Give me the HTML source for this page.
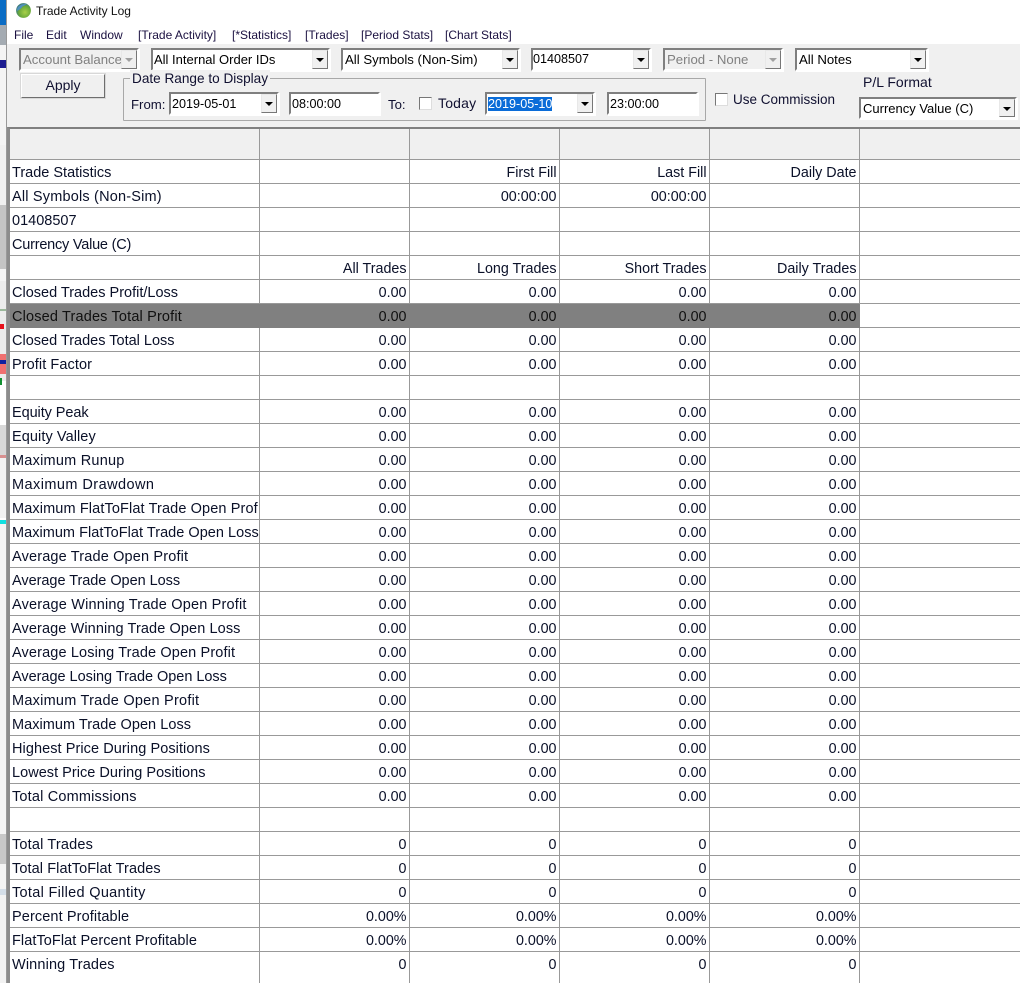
<!DOCTYPE html>
<html><head><meta charset="utf-8"><style>
html,body{margin:0;padding:0;background:#fff}
#p{position:relative;width:1020px;height:983px;overflow:hidden;background:#fff;font-family:"Liberation Sans",sans-serif;color:#101030}
.a{position:absolute;white-space:nowrap}
.s{position:absolute;left:0;width:6px}
.m{position:absolute;top:28px;font-size:12px;line-height:15px;white-space:nowrap;color:#1a1040}
.c{position:absolute;box-sizing:border-box;background:#fff;border:2px solid;border-color:#7f7f7f #fff #fff #7f7f7f;outline:0;font-size:13.2px;line-height:19px;padding-left:2px;white-space:nowrap;overflow:hidden;color:#000;box-shadow:1px 1px 0 #fff}
.c.d{background:#f0f0f0;color:#808080}
.c.n{font-size:12.6px}
.c.b{line-height:20px}
.c i{position:absolute;right:0;top:0;bottom:0;width:16px;background:#f0f0f0;border:1px solid;border-color:#e8e8e8 #777 #777 #e8e8e8;box-sizing:border-box}
.c i:after{content:"";position:absolute;left:3px;top:7px;border:4px solid transparent;border-top:4px solid #000;border-bottom:0}
.c.d i:after{border-top-color:#a0a0a0}
.k{position:absolute;box-sizing:border-box;width:13px;height:13px;background:#fff;border:1px solid #777;border-right-color:#ddd;border-bottom-color:#ddd}
.l{position:absolute;font-size:13.2px;line-height:17px;white-space:nowrap;color:#101030}
#t{position:absolute;left:7px;top:127px;width:1013px;height:856px;border-top:2px solid #808080;border-left:3px solid #8c8c8c;box-sizing:border-box}
.r{display:grid;grid-template-columns:250px 150px 150px 150px 150px 160px;height:24px;box-sizing:border-box;border-bottom:1px solid #999;font-size:14.3px;line-height:27px;color:#0a1028}
.r div{box-sizing:border-box;border-right:1px solid #999;text-align:right;padding-right:2.500px;white-space:nowrap;overflow:hidden;height:24px;margin-bottom:-1px}
.r div:first-child{text-align:left;padding:0 0 0 2px;font-size:14.5px}
.r div:last-child{border-right:0}
.h{background:#f0f0f0;height:31px}
.h div{height:31px}
.g{background:#808080;border-bottom-color:#808080}
.g div{border-right-color:#808080;color:#101010}
.g div:last-child{background:#fff;border-bottom:1px solid #999}
</style></head><body><div id="p">
<div class="s" style="top:0;height:25px;background:#0a6cc4"></div>
<div class="s" style="top:25px;height:20px;background:#a4abb2"></div>
<div class="s" style="top:45px;height:100px;background:#f4f4f4"></div>
<div class="s" style="top:60px;height:8px;background:#1c1c90"></div>
<div class="s" style="top:145px;height:60px;background:#f0f0f0"></div>
<div class="s" style="top:205px;height:64px;background:#c4c4c4"></div>
<div class="s" style="top:269px;height:12px;background:#f4f4f4"></div>
<div class="s" style="top:281px;height:100px;background:#ececec"></div>
<div class="s" style="top:309px;height:2px;background:#9bb89b"></div>
<div class="s" style="top:324px;height:5px;background:#e8121c;width:4px"></div>
<div class="s" style="top:354px;height:20px;background:#f07070"></div>
<div class="s" style="top:360px;height:4px;background:#1020a0"></div>
<div class="s" style="top:378px;height:7px;background:#109030;width:2px"></div>
<div class="s" style="top:425px;height:30px;background:#d8d8d8"></div>
<div class="s" style="top:455px;height:3px;background:#d89090"></div>
<div class="s" style="top:458px;height:60px;background:#f2f2f2"></div>
<div class="s" style="top:520px;height:4px;background:#10e0e0"></div>
<div class="s" style="top:524px;height:310px;background:#f4f4f4"></div>
<div class="s" style="top:834px;height:30px;background:#c8c8c8"></div>
<div class="s" style="top:864px;height:25px;background:#f4f4f4"></div>
<div class="s" style="top:889px;height:6px;background:#d4dee8"></div>
<div class="s" style="top:895px;height:88px;background:#f2f2f2"></div>
<div class="a" style="left:6px;top:0;width:1px;height:983px;background:#999"></div>

<div class="a" style="left:7px;top:44px;width:1013px;height:83px;background:#f0f0f0"></div>
<svg class="a" style="left:16px;top:3px" width="15" height="15" viewBox="0 0 15 15"><defs><radialGradient id="gl" cx=".6" cy=".62" r=".68"><stop offset="0" stop-color="#a8d048"/><stop offset=".6" stop-color="#6aa83a"/><stop offset="1" stop-color="#2f6f8c"/></radialGradient></defs><circle cx="7.5" cy="7.5" r="7.4" fill="url(#gl)"/><path d="M2 4 Q6 .2 11 1 Q8.500 2.500 6.500 3.500 Q4.500 6.500 1 8 Q.8 5.500 2 4Z" fill="#4f8fbe"/></svg>
<div class="a" style="left:36px;top:4px;font-size:12px;line-height:15px;color:#111">Trade Activity Log</div>
<div class="m" style="left:14px">File</div>
<div class="m" style="left:46px">Edit</div>
<div class="m" style="left:80px">Window</div>
<div class="m" style="left:138px">[Trade Activity]</div>
<div class="m" style="left:232px">[*Statistics]</div>
<div class="m" style="left:305px">[Trades]</div>
<div class="m" style="left:361px">[Period Stats]</div>
<div class="m" style="left:445px">[Chart Stats]</div>

<div class="c d" style="left:19px;top:48px;width:120px;height:23px">Account Balance<i></i></div>
<div class="c" style="left:151px;top:48px;width:179px;height:23px;font-size:13px;padding-left:1px">All Internal Order IDs<i></i></div>
<div class="c b" style="left:341px;top:48px;width:179px;height:23px">All Symbols (Non-Sim)<i></i></div>
<div class="c n" style="left:531px;top:48px;width:120px;height:23px;padding-left:0">01408507<i></i></div>
<div class="c d b" style="left:663px;top:48px;width:120px;height:23px">Period - None<i></i></div>
<div class="c b" style="left:795px;top:48px;width:133px;height:23px">All Notes<i></i></div>

<div class="a" style="left:21px;top:74px;width:84px;height:24px;box-sizing:border-box;border:1px solid;border-color:#fff #6e6e6e #6e6e6e #fff;background:#f0f0f0;font-size:14px;line-height:21px;text-align:center;color:#101030;box-shadow:0 0 0 1px #d8d8d8">Apply</div>

<div class="a" style="left:123px;top:78px;width:583px;height:43px;box-sizing:border-box;border:1px solid #a8a8a8;border-radius:1px"></div>
<div class="a" style="left:130px;top:70px;padding:0 2px;background:#f0f0f0;font-size:13.6px;line-height:17px;color:#101030">Date Range to Display</div>
<div class="l" style="left:131px;top:96px">From:</div>
<div class="c n b" style="left:169px;top:92px;width:110px;height:23px;padding-left:1px">2019-05-01<i></i></div>
<div class="c n b" style="left:289px;top:92px;width:91px;height:23px;padding-left:1px">08:00:00</div>
<div class="l" style="left:388px;top:96px">To:</div>
<div class="k" style="left:419px;top:97px"></div>
<div class="l" style="left:438px;top:95px;font-size:14px;letter-spacing:.2px">Today</div>
<div class="c n b" style="left:485px;top:92px;width:110px;height:23px;padding-left:1px"><span style="background:#0a6cd8;color:#fff">2019-05-10</span><i></i></div>
<div class="c n b" style="left:607px;top:92px;width:91px;height:23px;padding-left:1px">23:00:00</div>
<div class="k" style="left:715px;top:93px"></div>
<div class="l" style="left:733px;top:91px;font-size:13.5px">Use Commission</div>
<div class="l" style="left:863px;top:74px;font-size:14px">P/L Format</div>
<div class="c" style="left:859px;top:97px;width:158px;height:22px;line-height:20px;font-size:13px">Currency Value (C)<i></i></div>

<div id="t">
<div class="r h"><div></div><div></div><div></div><div></div><div></div><div></div></div>
<div class="r"><div>Trade Statistics</div><div></div><div>First Fill</div><div>Last Fill</div><div>Daily Date</div><div></div></div>
<div class="r"><div style="letter-spacing:.19px">All Symbols (Non-Sim)</div><div></div><div>00:00:00</div><div>00:00:00</div><div></div><div></div></div>
<div class="r"><div>01408507</div><div></div><div></div><div></div><div></div><div></div></div>
<div class="r"><div style="letter-spacing:-.22px">Currency Value (C)</div><div></div><div></div><div></div><div></div><div></div></div>
<div class="r"><div></div><div>All Trades</div><div>Long Trades</div><div>Short Trades</div><div>Daily Trades</div><div></div></div>
<div class="r"><div>Closed Trades Profit/Loss</div><div>0.00</div><div>0.00</div><div>0.00</div><div>0.00</div><div></div></div>
<div class="r g"><div style="letter-spacing:.16px">Closed Trades Total Profit</div><div>0.00</div><div>0.00</div><div>0.00</div><div>0.00</div><div></div></div>
<div class="r"><div>Closed Trades Total Loss</div><div>0.00</div><div>0.00</div><div>0.00</div><div>0.00</div><div></div></div>
<div class="r"><div style="letter-spacing:.08px">Profit Factor</div><div>0.00</div><div>0.00</div><div>0.00</div><div>0.00</div><div></div></div>
<div class="r"><div></div><div></div><div></div><div></div><div></div><div></div></div>
<div class="r"><div style="letter-spacing:-.08px">Equity Peak</div><div>0.00</div><div>0.00</div><div>0.00</div><div>0.00</div><div></div></div>
<div class="r"><div style="letter-spacing:.08px">Equity Valley</div><div>0.00</div><div>0.00</div><div>0.00</div><div>0.00</div><div></div></div>
<div class="r"><div style="letter-spacing:.23px">Maximum Runup</div><div>0.00</div><div>0.00</div><div>0.00</div><div>0.00</div><div></div></div>
<div class="r"><div style="letter-spacing:.44px">Maximum Drawdown</div><div>0.00</div><div>0.00</div><div>0.00</div><div>0.00</div><div></div></div>
<div class="r"><div style="letter-spacing:.12px">Maximum FlatToFlat Trade Open Prof</div><div>0.00</div><div>0.00</div><div>0.00</div><div>0.00</div><div></div></div>
<div class="r"><div style="letter-spacing:.03px">Maximum FlatToFlat Trade Open Loss</div><div>0.00</div><div>0.00</div><div>0.00</div><div>0.00</div><div></div></div>
<div class="r"><div style="letter-spacing:.16px">Average Trade Open Profit</div><div>0.00</div><div>0.00</div><div>0.00</div><div>0.00</div><div></div></div>
<div class="r"><div style="letter-spacing:-.04px">Average Trade Open Loss</div><div>0.00</div><div>0.00</div><div>0.00</div><div>0.00</div><div></div></div>
<div class="r"><div style="letter-spacing:.18px">Average Winning Trade Open Profit</div><div>0.00</div><div>0.00</div><div>0.00</div><div>0.00</div><div></div></div>
<div class="r"><div style="letter-spacing:.1px">Average Winning Trade Open Loss</div><div>0.00</div><div>0.00</div><div>0.00</div><div>0.00</div><div></div></div>
<div class="r"><div style="letter-spacing:.13px">Average Losing Trade Open Profit</div><div>0.00</div><div>0.00</div><div>0.00</div><div>0.00</div><div></div></div>
<div class="r"><div style="letter-spacing:-.03px">Average Losing Trade Open Loss</div><div>0.00</div><div>0.00</div><div>0.00</div><div>0.00</div><div></div></div>
<div class="r"><div style="letter-spacing:.24px">Maximum Trade Open Profit</div><div>0.00</div><div>0.00</div><div>0.00</div><div>0.00</div><div></div></div>
<div class="r"><div style="letter-spacing:.04px">Maximum Trade Open Loss</div><div>0.00</div><div>0.00</div><div>0.00</div><div>0.00</div><div></div></div>
<div class="r"><div style="letter-spacing:.07px">Highest Price During Positions</div><div>0.00</div><div>0.00</div><div>0.00</div><div>0.00</div><div></div></div>
<div class="r"><div style="letter-spacing:.03px">Lowest Price During Positions</div><div>0.00</div><div>0.00</div><div>0.00</div><div>0.00</div><div></div></div>
<div class="r"><div style="letter-spacing:.18px">Total Commissions</div><div>0.00</div><div>0.00</div><div>0.00</div><div>0.00</div><div></div></div>
<div class="r"><div></div><div></div><div></div><div></div><div></div><div></div></div>
<div class="r"><div style="letter-spacing:.17px">Total Trades</div><div>0</div><div>0</div><div>0</div><div>0</div><div></div></div>
<div class="r"><div style="letter-spacing:.09px">Total FlatToFlat Trades</div><div>0</div><div>0</div><div>0</div><div>0</div><div></div></div>
<div class="r"><div style="letter-spacing:.3px">Total Filled Quantity</div><div>0</div><div>0</div><div>0</div><div>0</div><div></div></div>
<div class="r"><div style="letter-spacing:.11px">Percent Profitable</div><div>0.00%</div><div>0.00%</div><div>0.00%</div><div>0.00%</div><div></div></div>
<div class="r"><div style="letter-spacing:.07px">FlatToFlat Percent Profitable</div><div>0.00%</div><div>0.00%</div><div>0.00%</div><div>0.00%</div><div></div></div>
<div class="r" style="height:32px;border-bottom:0"><div style="height:32px;letter-spacing:.14px">Winning Trades</div><div style="height:32px">0</div><div style="height:32px">0</div><div style="height:32px">0</div><div style="height:32px">0</div><div style="height:32px"></div></div>
</div>
</div></body></html>
